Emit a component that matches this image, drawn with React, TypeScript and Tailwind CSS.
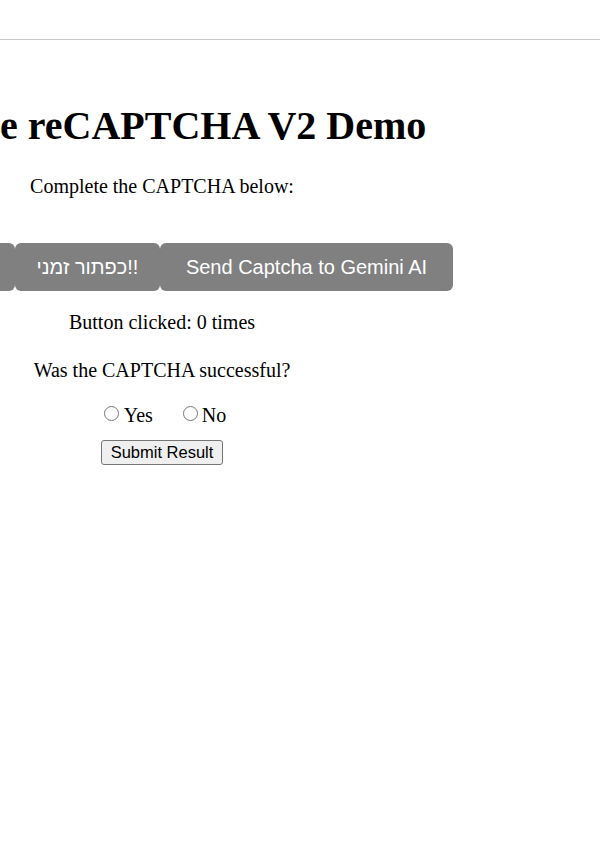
export default function App() {
    return (
        <div className="min-h-screen bg-white text-black font-['Liberation_Serif',serif]">
            <div className="h-[40px] border-b border-[#c8c8c8]" />

            <div className="w-[324px] flex flex-col items-center">
                <h1 className="mt-[63px] text-[40px] leading-[46px] font-bold whitespace-nowrap">
                    Google reCAPTCHA V2 Demo
                </h1>

                <p className="mt-[26px] text-[20px] leading-[23px] whitespace-nowrap">
                    Complete the CAPTCHA below:
                </p>

                <div className="mt-[45px] flex font-['Liberation_Sans',Arial,sans-serif] text-[20px] text-white">
                    <button className="w-[144px] h-[48px] bg-[#808080] rounded-[6px] whitespace-nowrap">
                        Reload
                    </button>
                    <button className="w-[145px] h-[48px] bg-[#808080] rounded-[6px] whitespace-nowrap">
                        כפתור זמני!!
                    </button>
                    <button className="w-[293px] h-[48px] bg-[#808080] rounded-[6px] whitespace-nowrap">
                        Send Captcha to Gemini AI
                    </button>
                </div>

                <p className="mt-[20px] text-[20px] leading-[23px] whitespace-nowrap">
                    Button clicked: 0 times
                </p>

                <p className="mt-[25px] text-[20px] leading-[23px] whitespace-nowrap">
                    Was the CAPTCHA successful?
                </p>

                <div className="mt-[22px] pl-[6px] flex items-center text-[20px] leading-[23px] whitespace-nowrap">
                    <input type="radio" name="result" className="w-[15px] h-[15px] m-0 mb-[4px]" />
                    <span className="ml-[5px]">Yes</span>
                    <input type="radio" name="result" className="ml-[30px] w-[15px] h-[15px] m-0 mb-[4px]" />
                    <span className="ml-[4px]">No</span>
                </div>

                <button className="mt-[13px] w-[122px] h-[25px] bg-[#efefef] border border-[#767676] rounded-[3px] font-['Liberation_Sans',Arial,sans-serif] text-[16.5px] leading-none whitespace-nowrap">
                    Submit Result
                </button>
            </div>
        </div>
    );
}
